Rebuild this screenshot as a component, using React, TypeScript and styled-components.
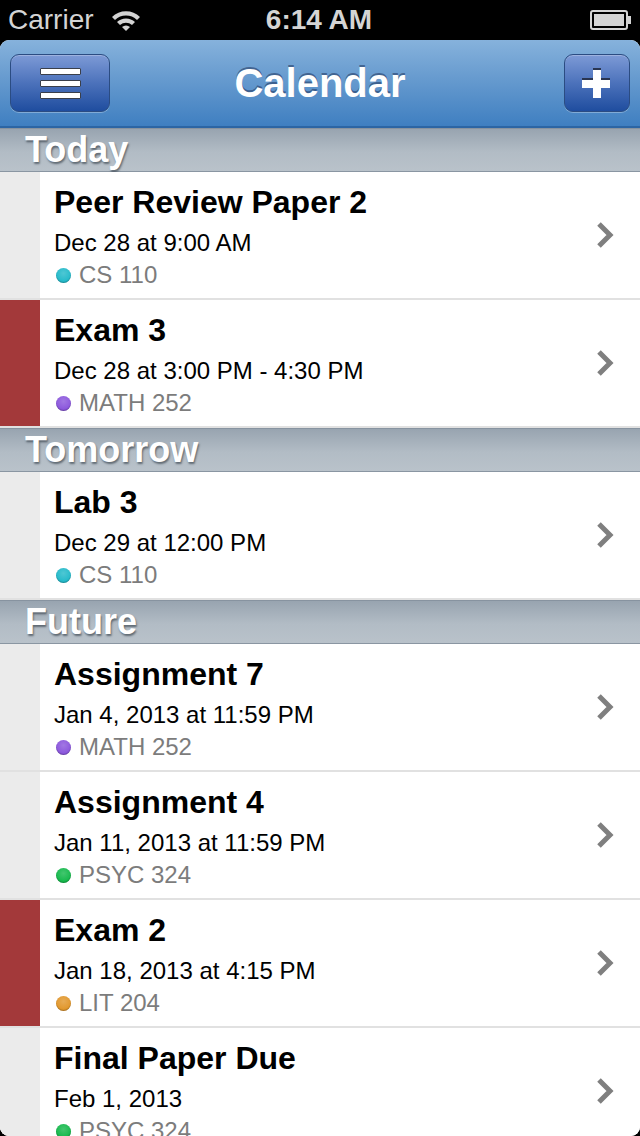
import React from "react";
import styled, { createGlobalStyle } from "styled-components";

const Global = createGlobalStyle`
  html, body { margin: 0; padding: 0; background: #000; }
  body { font-family: "Liberation Sans", Arial, Helvetica, sans-serif; }
`;

const Screen = styled.div`
  width: 640px;
  height: 1136px;
  background: #000;
  display: flex;
  flex-direction: column;
  overflow: hidden;
`;

const StatusBar = styled.div`
  height: 40px;
  flex: none;
  display: grid;
  grid-template-columns: 1fr auto 1fr;
  align-items: center;
  padding: 0 8px;
  color: #d4d4d4;
  font-size: 28px;
`;

const Carrier = styled.div`
  display: flex;
  align-items: center;
  gap: 16px;
`;

const Time = styled.div`
  font-weight: bold;
  font-size: 28px;
  padding-right: 2px;
`;

const Battery = styled.div`
  justify-self: end;
  display: flex;
  align-items: center;
`;

const Body = styled.div`
  flex: 1;
  background: #fff;
  border-radius: 9px;
  overflow: hidden;
  display: flex;
  flex-direction: column;
`;

const NavBar = styled.div`
  height: 86px;
  flex: none;
  background: linear-gradient(#86b2dc, #6a9dd0 40%, #3f7fc1);
  border-bottom: 2px solid #2c65a4;
  display: flex;
  align-items: center;
  justify-content: space-between;
  padding: 0 10px;
  position: relative;
`;

const NavButton = styled.button<{ $w: number }>`
  width: ${(p) => p.$w}px;
  height: 58px;
  border-radius: 9px;
  border: 1px solid #2b4c82;
  background: linear-gradient(#7d9ad6, #4c72bb 50%, #1f4d9f);
  box-shadow: inset 0 1px 0 rgba(255, 255, 255, 0.25), 0 1px 0 rgba(255, 255, 255, 0.3);
  display: flex;
  align-items: center;
  justify-content: center;
  padding: 0;
`;

const Bars = styled.div`
  display: flex;
  flex-direction: column;
  gap: 5px;
`;

const Bar = styled.div`
  width: 39px;
  height: 5px;
  background: #fff;
  border: 1px solid #3a3f4a;
  border-radius: 1px;
`;

const Title = styled.div`
  position: absolute;
  left: 0;
  right: 0;
  text-align: center;
  color: #fff;
  font-weight: bold;
  font-size: 40px;
  text-shadow: 0 -2px 0 rgba(30, 50, 90, 0.55);
  pointer-events: none;
`;

const List = styled.div`
  flex: 1;
  display: flex;
  flex-direction: column;
`;

const SectionHeader = styled.div`
  height: 42px;
  flex: none;
  border-top: 1px solid #8793a0;
  border-bottom: 1px solid #8a96a2;
  background: linear-gradient(#98a4b0, #b2bcc5 55%, #b9c2ca);
  display: flex;
  align-items: center;
  padding-left: 25px;
  color: #fff;
  font-weight: bold;
  font-size: 36px;
  text-shadow: 1px 2px 2px rgba(40, 50, 60, 0.6);
`;

const Row = styled.div`
  height: 126px;
  flex: none;
  display: flex;
  border-bottom: 2px solid #e1e1e1;
  background: #fff;
`;

const Stripe = styled.div<{ $red: boolean }>`
  width: 40px;
  flex: none;
  background: ${(p) => (p.$red ? "#a3393a" : "#ebebeb")};
`;

const Content = styled.div`
  flex: 1;
  display: flex;
  flex-direction: column;
  padding: 12px 0 0 14px;
  min-width: 0;
`;

const ItemTitle = styled.div`
  font-weight: bold;
  font-size: 32px;
  line-height: 36px;
  color: #000;
  white-space: nowrap;
`;

const ItemDate = styled.div`
  font-size: 24px;
  line-height: 30px;
  margin-top: 8px;
  color: #000;
  white-space: nowrap;
`;

const Course = styled.div`
  font-size: 24px;
  line-height: 30px;
  margin-top: 2px;
  color: #7c7c7c;
  display: flex;
  align-items: center;
  gap: 8px;
  padding-left: 2px;
  white-space: nowrap;
`;

const Dot = styled.span<{ $c: string }>`
  width: 15px;
  height: 15px;
  border-radius: 50%;
  background: radial-gradient(circle at 50% 35%, ${(p) => p.$c}cc, ${(p) => p.$c} 70%);
  box-shadow: inset 0 -1px 1px rgba(0, 0, 0, 0.25);
  flex: none;
`;

const Chevron = styled.div`
  width: 70px;
  flex: none;
  display: flex;
  align-items: center;
  justify-content: center;
`;

type Item = { title: string; date: string; course: string; color: string; red?: boolean };

const sections: { name: string; items: Item[] }[] = [
  {
    name: "Today",
    items: [
      { title: "Peer Review Paper 2", date: "Dec 28 at 9:00 AM", course: "CS 110", color: "#22b9c9" },
      { title: "Exam 3", date: "Dec 28 at 3:00 PM - 4:30 PM", course: "MATH 252", color: "#8a55dc", red: true },
    ],
  },
  {
    name: "Tomorrow",
    items: [{ title: "Lab 3", date: "Dec 29 at 12:00 PM", course: "CS 110", color: "#22b9c9" }],
  },
  {
    name: "Future",
    items: [
      { title: "Assignment 7", date: "Jan 4, 2013 at 11:59 PM", course: "MATH 252", color: "#8a55dc" },
      { title: "Assignment 4", date: "Jan 11, 2013 at 11:59 PM", course: "PSYC 324", color: "#13b84a" },
      { title: "Exam 2", date: "Jan 18, 2013 at 4:15 PM", course: "LIT 204", color: "#e1962a", red: true },
      { title: "Final Paper Due", date: "Feb 1, 2013", course: "PSYC 324", color: "#13b84a" },
    ],
  },
];

const Wifi = () => (
  <svg width="32" height="22" viewBox="0 0 32 22">
    <path d="M2 8 A20 20 0 0 1 30 8 L27 11 A16 16 0 0 0 5 11 Z" fill="#d4d4d4" />
    <path d="M7 13 A13 13 0 0 1 25 13 L22 16 A9 9 0 0 0 10 16 Z" fill="#d4d4d4" />
    <path d="M12 18 A6 6 0 0 1 20 18 L16 22 Z" fill="#d4d4d4" />
  </svg>
);

const BatteryIcon = () => (
  <svg width="42" height="20" viewBox="0 0 42 20">
    <rect x="1" y="1" width="36" height="18" rx="2" fill="none" stroke="#d4d4d4" strokeWidth="2" />
    <rect x="4" y="4" width="30" height="12" fill="#d4d4d4" />
    <rect x="38" y="6" width="3" height="8" fill="#d4d4d4" />
  </svg>
);

const PlusIcon = () => (
  <svg width="30" height="30" viewBox="0 0 30 30">
    <rect x="11" y="0" width="8" height="28" fill="#2a3550" />
    <rect x="0" y="10" width="28" height="8" fill="#2a3550" />
    <rect x="11" y="2" width="8" height="28" fill="#fff" />
    <rect x="0" y="12" width="28" height="8" fill="#fff" />
  </svg>
);

const ChevronIcon = () => (
  <svg width="18" height="28" viewBox="0 0 18 28">
    <polyline points="3,3 14,14 3,25" fill="none" stroke="#7f7f7f" strokeWidth="5" strokeLinejoin="miter" />
  </svg>
);

export default function App() {
  return (
    <>
      <Global />
      <Screen>
        <StatusBar>
          <Carrier>
            Carrier
            <Wifi />
          </Carrier>
          <Time>6:14 AM</Time>
          <Battery>
            <BatteryIcon />
          </Battery>
        </StatusBar>
        <Body>
          <NavBar>
            <NavButton $w={100}>
              <Bars>
                <Bar />
                <Bar />
                <Bar />
              </Bars>
            </NavButton>
            <Title>Calendar</Title>
            <NavButton $w={66}>
              <PlusIcon />
            </NavButton>
          </NavBar>
          <List>
            {sections.map((s) => (
              <React.Fragment key={s.name}>
                <SectionHeader>{s.name}</SectionHeader>
                {s.items.map((it) => (
                  <Row key={it.title}>
                    <Stripe $red={!!it.red} />
                    <Content>
                      <ItemTitle>{it.title}</ItemTitle>
                      <ItemDate>{it.date}</ItemDate>
                      <Course>
                        <Dot $c={it.color} />
                        {it.course}
                      </Course>
                    </Content>
                    <Chevron>
                      <ChevronIcon />
                    </Chevron>
                  </Row>
                ))}
              </React.Fragment>
            ))}
          </List>
        </Body>
      </Screen>
    </>
  );
}
